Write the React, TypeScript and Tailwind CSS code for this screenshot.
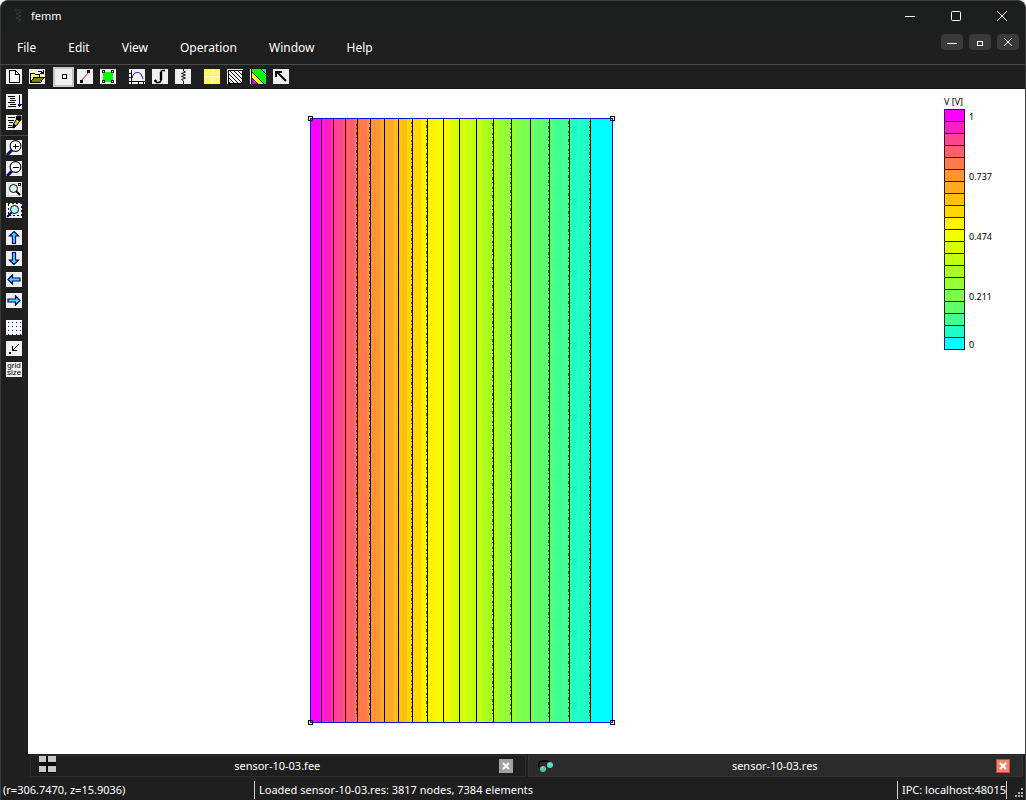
import React from "react";

type IconProps = { children: React.ReactNode; bg?: string };

function Icon({ children, bg = "#f0f0f0" }: IconProps) {
  return (
    <svg
      width="16"
      height="15"
      viewBox="0 0 16 15"
      shapeRendering="crispEdges"
      fill="none"
      stroke="#000"
      className="block shrink-0"
    >
      <rect width="16" height="15" fill={bg} stroke="none" />
      {children}
    </svg>
  );
}

const arrowUp = "M8 1.5 L12.5 6 H9.5 V13.5 H6.5 V6 H3.5 Z";

function Arrow({ angle }: { angle: number }) {
  return (
    <Icon>
      <path
        d={arrowUp}
        fill="#40e0ff"
        stroke="#00006a"
        strokeWidth="1.2"
        shapeRendering="auto"
        transform={`rotate(${angle} 8 7.5)`}
      />
    </Icon>
  );
}

function Lens({ sign }: { sign?: string }) {
  return (
    <Icon>
      <g shapeRendering="auto">
        <path d="M6 10 L1 15" stroke="#000080" strokeWidth="3" />
        <circle cx="9.5" cy="6" r="5.4" fill="#fff" strokeWidth="1.1" />
      </g>
      <path d={sign} />
    </Icon>
  );
}

const newIcon = (
  <Icon>
    <path d="M3.5 1.5 H9.5 L13.5 5.5 V13.5 H3.5 Z" fill="#fff" />
    <path d="M9.5 1.5 V5.5 H13.5 M3 13 H14" />
  </Icon>
);

const openIcon = (
  <Icon>
    <path d="M1.5 13 V4.5 H5.5 L6.5 5.5 H10.5 V8" fill="#ffff80" />
    <path d="M1.5 13.5 L5 8.5 H15 L11.5 13.5 Z" fill="#808000" />
    <path d="M9 2.5 H12 L14 4.5 M14.5 1 V4.5 H11" />
  </Icon>
);

const pointIcon = (
  <Icon>
    <rect x="6.5" y="5.5" width="4" height="4" fill="#fff" />
  </Icon>
);

const lineIcon = (
  <Icon>
    <path d="M4 12 L12 3" stroke="#c02030" shapeRendering="auto" />
    <path d="M3 11h3v3h-3z M10 1h3v3h-3z" fill="#300" stroke="none" />
  </Icon>
);

const blockIcon = (
  <Icon>
    <rect x="3" y="3" width="10" height="10" fill="#00ff00" stroke="none" />
    <path
      d="M2.5 1.5h2v2h-2z M11.5 1.5h2v2h-2z M2.5 11.5h2v2h-2z M11.5 11.5h2v2h-2z"
      fill="#fff"
    />
  </Icon>
);

const plotIcon = (
  <Icon>
    <path d="M2.5 1 V15 M0 12.5 H16 M0 4.5 H2 M0 8.5 H2 M9.5 13 V15 M14.5 13 V15" />
    <path
      d="M3 9 C4.5 4 6.5 3.5 8.5 3.5 C11 3.5 12.5 5 14 10"
      stroke="#0000c0"
      shapeRendering="auto"
    />
  </Icon>
);

const integralIcon = (
  <Icon>
    <g shapeRendering="auto">
      <path
        d="M13 1.5 H10.5 Q9 1.5 9 4 V10.5 Q9 13.5 6.5 13.5 H4"
        strokeWidth="1.6"
      />
      <path d="M9 3 V11" strokeWidth="2.4" />
      <circle cx="3.5" cy="12" r="1" fill="#000" />
    </g>
  </Icon>
);

const circuitIcon = (
  <Icon>
    <path
      d="M8.5 0 V2 L10.5 3 L6.5 4.5 L10.5 6 L6.5 7.5 L10.5 9 L6.5 10.5 L8.5 12 V15"
      strokeWidth=".9"
      shapeRendering="auto"
    />
  </Icon>
);

const meshIcon = (
  <Icon bg="#ffff48">
    <path
      d="M2 2L14 13 M14 2L2 13"
      stroke="#ffec9c"
      strokeWidth="2"
      shapeRendering="auto"
    />
    <path d="M8 0V15 M0 7.5H16" stroke="#fffcc0" />
    <path d="M3.5 2.5h3v3h-3z M10.5 2.5h3v3h-3z M3.5 9.5h3v3h-3z M10.5 9.5h3v3h-3z" stroke="#fff08c" />
  </Icon>
);

const contourIcon = (
  <Icon>
    <path
      d="M1 12 L3 14 M1 8 L7 14 M1 4 L11 14 M2 1 L15 14 M6 1 L15 10 M10 1 L15 6"
      shapeRendering="auto"
    />
    <path d="M1.5 1 V14.5 H15.5 V1.5 H1" />
  </Icon>
);

const densityIcon = (
  <Icon bg="#00ff00">
    <path d="M11 0 H16 V5 Z" fill="#00d8e8" stroke="none" />
    <path d="M1 2 L14 15 H7 L1 9 Z" fill="#ffff00" stroke="none" />
    <path d="M1 8 L8 15 H1 Z" fill="#d000c0" stroke="none" />
    <path
      d="M1 8 L8 15 M1 2 L14 15 M11 0 L16 5"
      shapeRendering="auto"
    />
    <path d="M0.5 0 V15" stroke="#fff" />
    <path d="M1.5 0 V15" />
  </Icon>
);

const vectorIcon = (
  <Icon>
    <path d="M4 3 L13 12" strokeWidth="2" shapeRendering="auto" />
    <path d="M2 2 H9 V4 H4 V8 H2 Z" fill="#000" stroke="none" />
  </Icon>
);

const listIcon = (
  <Icon>
    <path d="M2 2.5H9 M4 4.5H9 M4 6.5H10 M2 8.5H9 M4 10.5H10 M2 12.5H10" />
    <path d="M13.5 1 V13 M11.5 10.5 H16 M12 11.5 H15" stroke="#000080" />
  </Icon>
);

const notesIcon = (
  <Icon>
    <path d="M2 2.5H9 M2 5.5H8 M3 7.5H7 M2 10.5H6 M2 12.5H9" />
    <g shapeRendering="auto">
      <path d="M7 12 L8 8 L12 2 L15 4 L11 10 Z" fill="#e8c020" />
      <path d="M11 1 H15 V5 L13 6 L10 3 Z" fill="#000" />
      <path d="M7 13 L7.5 9 L10 11 Z" fill="#000" />
    </g>
  </Icon>
);

const pageZoomIcon = (
  <Icon>
    <path d="M2.5 1.5H12L14.5 4.5V13.5H2.5Z" fill="#fff" stroke="#ddd" />
    <path d="M12 1.5 H14 V4 M12.5 1 V3.5 H15" />
    <g shapeRendering="auto">
      <circle cx="7.5" cy="6.5" r="4" fill="#d8f8f8" />
      <path d="M10 9 L14 13" strokeWidth="2" />
    </g>
  </Icon>
);

const windowZoomIcon = (
  <Icon>
    <path d="M2 .5H15.5V12.5H2.5V1" stroke="#000080" strokeDasharray="2 2" />
    <g shapeRendering="auto">
      <path d="M6 9 L1 14" stroke="#000080" strokeWidth="2" />
      <circle cx="8.5" cy="6.5" r="4" fill="#b8f8f8" />
    </g>
  </Icon>
);

const gridIcon = (
  <Icon bg="#f8f8ff">
    <path
      d="M2 2.5H16 M2 6.5H16 M2 10.5H16 M2 14.5H16"
      stroke="#0000a0"
      strokeDasharray="1 3"
    />
  </Icon>
);

const snapIcon = (
  <Icon>
    <path d="M13 3 L6.5 9.5" shapeRendering="auto" />
    <path d="M6.5 5 V9.5 H11" />
    <rect x="3" y="11" width="2" height="2" fill="#000080" stroke="none" />
  </Icon>
);

const gridSizeIcon = (
  <span className="block h-[15px] w-4 overflow-hidden bg-[#f0f0f0] text-center font-['Liberation_Sans',sans-serif] text-[8px] leading-[7px] text-black">
    grid size
  </span>
);

const toolGroups = [
  [
    { label: "New", icon: newIcon },
    { label: "Open", icon: openIcon },
  ],
  [
    { label: "Point values", icon: pointIcon },
    { label: "Contours", icon: lineIcon },
    { label: "Areas", icon: blockIcon },
  ],
  [
    { label: "Plot", icon: plotIcon },
    { label: "Integrate", icon: integralIcon },
    { label: "Conductor properties", icon: circuitIcon },
  ],
  [
    { label: "Show mesh", icon: meshIcon },
    { label: "Contour plot", icon: contourIcon },
    { label: "Density plot", icon: densityIcon },
    { label: "Vector plot", icon: vectorIcon },
  ],
];

const sideGroups = [
  [
    { label: "Output window", icon: listIcon },
    { label: "Notes", icon: notesIcon },
  ],
  [
    { label: "Zoom in", icon: <Lens sign="M7 6.5 H13 M9.5 4 V9" /> },
    { label: "Zoom out", icon: <Lens sign="M7 6.5 H13" /> },
    { label: "Natural zoom", icon: pageZoomIcon },
    { label: "Zoom window", icon: windowZoomIcon },
  ],
  [
    { label: "Pan up", icon: <Arrow angle={0} /> },
    { label: "Pan down", icon: <Arrow angle={180} /> },
    { label: "Pan left", icon: <Arrow angle={270} /> },
    { label: "Pan right", icon: <Arrow angle={90} /> },
  ],
  [
    { label: "Show grid", icon: gridIcon },
    { label: "Snap to grid", icon: snapIcon },
    { label: "Grid size", icon: gridSizeIcon },
  ],
];

const menus = ["File", "Edit", "View", "Operation", "Window", "Help"];

// from 1 V down to 0 V
const colors = [
  "#ff00ff", "#ff20c4", "#ff4492", "#ff606c", "#ff7a4c",
  "#ff9432", "#ffaa20", "#ffc010", "#ffd800", "#fff400",
  "#f2ff00", "#d8ff00", "#c2ff10", "#aaff20", "#94ff34",
  "#7cff4c", "#60ff6c", "#44ff92", "#20ffc4", "#00ffff",
];

const legendLabels: Record<number, string> = {
  0: "1",
  5: "0.737",
  10: "0.474",
  15: "0.211",
  19: "0",
};

const WIDTH = 302;
const HEIGHT = 604;

// contours that wobble over a pixel edge
const rough = [3, 4, 7, 8, 12, 13, 15, 16, 17];

// the potential falls with the logarithm of the radius
const radiusAt = (t: number) => 3 + 314 * (Math.exp(0.6735 * t) - 1);

function FieldPlot() {
  const lines = Array.from({ length: 18 }, (_, i) => radiusAt((i + 1) / 19));
  return (
    <svg width="308" height="610" viewBox="0 0 308 610">
      {colors.map((color, i) => (
        <rect
          key={color}
          x={radiusAt(i / 20)}
          y="3"
          width={WIDTH + 3 - radiusAt(i / 20)}
          height={HEIGHT}
          fill={color}
        />
      ))}
      <g stroke="#000" shapeRendering="crispEdges">
        {lines.map((x, i) => (
          <React.Fragment key={i}>
            <path d={`M${Math.floor(x) + 0.5} 3V607`} />
            {rough.includes(i) && (
              <path
                d={`M${Math.floor(x) - 0.5} 6V602`}
                strokeDasharray="2 2 1 3 3 2 1 4"
                strokeDashoffset={i * 5}
                strokeOpacity="0.55"
              />
            )}
          </React.Fragment>
        ))}
      </g>
      <rect
        x="3.5"
        y="3.5"
        width={WIDTH}
        height={HEIGHT}
        fill="none"
        stroke="#1010d8"
      />
      {[3.5, 305.5].map((x) =>
        [3.5, 607.5].map((y) => (
          <rect
            key={`${x}-${y}`}
            x={x - 2}
            y={y - 2}
            width="4"
            height="4"
            fill="none"
            stroke="#000"
          />
        ))
      )}
    </svg>
  );
}

function Legend() {
  return (
    <aside className="w-[131px] shrink-0 pt-[7px] pl-[50px] text-[9px] text-black">
      <p className="leading-3">V [V]</p>
      <ul className="mt-px">
        {colors.map((color, i) => (
          <li key={color} className="flex h-3 items-center gap-1">
            <span
              className="h-[13px] w-[21px] shrink-0 self-start border border-[#222]"
              style={{ backgroundColor: color }}
            />
            <span className="pt-1 leading-3">{legendLabels[i]}</span>
          </li>
        ))}
      </ul>
    </aside>
  );
}

function CloseMark() {
  return (
    <svg width="8" height="8" viewBox="0 0 8 8" stroke="#fff" strokeWidth="2">
      <path d="M1 1L7 7M7 1L1 7" />
    </svg>
  );
}

function App() {
  return (
    <div className="flex min-h-screen flex-col rounded-t-lg border-x border-t border-[#3c3c3c] bg-[#1f1f1f] font-['Noto_Sans','Open_Sans',sans-serif] text-xs text-white">
      <header className="flex h-[30px] items-center rounded-t-lg bg-[#1c1f1e] pl-3">
        <svg width="9" height="14" viewBox="0 0 9 14" stroke="#3c3c3c" fill="none">
          <path d="M2 1H6L8 3L3 5L8 7L3 9L8 11L5 13" />
        </svg>
        <h1 className="ml-[9px] flex-1 text-[11px]">femm</h1>
        <button aria-label="Minimize" className="flex h-full w-[46px] items-center justify-center">
          <svg width="10" height="10" stroke="#fff">
            <path d="M0 5.5H10" />
          </svg>
        </button>
        <button aria-label="Maximize" className="flex h-full w-[46px] items-center justify-center">
          <svg width="10" height="10" stroke="#fff" fill="none">
            <rect x=".5" y=".5" width="9" height="9" rx="1" />
          </svg>
        </button>
        <button aria-label="Close" className="flex h-full w-[46px] items-center justify-center">
          <svg width="10" height="10" stroke="#fff">
            <path d="M0 0L10 10M10 0L0 10" />
          </svg>
        </button>
      </header>

      <nav className="flex h-[34px] items-center border-b border-[#4a4a4a] pr-[6px]">
        <div className="flex flex-1">
          {menus.map((menu) => (
            <button key={menu} className="px-4 leading-5">
              {menu}
            </button>
          ))}
        </div>
        <div className="mb-3 flex gap-[6px]">
          <button aria-label="Minimize document" className="flex h-4 w-[22px] items-center justify-center rounded bg-[#3a3a3a]">
            <svg width="10" height="10" stroke="#fff">
              <path d="M0 6.5H10" />
            </svg>
          </button>
          <button aria-label="Restore document" className="flex h-4 w-[22px] items-center justify-center rounded bg-[#3a3a3a]">
            <svg width="10" height="10" stroke="#fff" fill="none">
              <rect x="2.5" y="4.5" width="5" height="4" />
            </svg>
          </button>
          <button aria-label="Close document" className="flex h-4 w-[22px] items-center justify-center rounded bg-[#3a3a3a]">
            <svg width="10" height="10" stroke="#fff">
              <path d="M1 1L9 9M9 1L1 9" />
            </svg>
          </button>
        </div>
      </nav>

      <div className="flex h-6 items-center gap-[13px] border-b border-[#161616] pl-[5px]">
        {toolGroups.map((group, g) => (
          <div key={g} className="flex items-center gap-[7px]">
            {group.map((tool) =>
              tool.label === "Point values" ? (
                <button
                  key={tool.label}
                  aria-label={tool.label}
                  aria-pressed="true"
                  className="-mr-1 -ml-[5px] flex h-5 w-[21px] items-center justify-center border-2 border-[#c4c4c4] bg-[#f0f0f0]"
                >
                  {tool.icon}
                </button>
              ) : (
                <button key={tool.label} aria-label={tool.label}>
                  {tool.icon}
                </button>
              )
            )}
          </div>
        ))}
      </div>

      <div className="flex flex-1">
        <div className="flex w-[27px] shrink-0 flex-col gap-[6px] pt-[5px]">
          {sideGroups.map((group, g) => (
            <div
              key={g}
              className={`flex flex-col items-start gap-[6px] pl-[5px] ${
                g === 0 ? "border-b border-[#444] pb-[5px]" : g === 1 ? "-mt-[2px]" : "mt-[6px]"
              }`}
            >
              {group.map((tool) => (
                <button key={tool.label} aria-label={tool.label}>
                  {tool.icon}
                </button>
              ))}
            </div>
          ))}
        </div>

        <div className="flex min-w-0 flex-1 flex-col">
          <main className="flex flex-1 bg-white">
            <div className="flex flex-1 items-center justify-center pb-1">
              <FieldPlot />
            </div>
            <Legend />
          </main>
          <div className="flex h-[25px] gap-[2px] px-[2px] py-[1px] text-[11px]">
            <div className="flex h-[22px] flex-1 items-center border border-[#2c2c2c] pr-3 pl-2">
              <svg width="17" height="17" viewBox="0 0 17 17" className="shrink-0 self-start">
                <path d="M0 0H17V17H0Z" fill="#000" />
                <path d="M0 0H7V6H0Z M9 0H17V6H9Z M0 10H7V16H0Z M9 10H17V16H9Z" fill="#c8c8c8" />
                <path d="M0 8H17" stroke="#1f1f1f" />
              </svg>
              <button className="flex-1 leading-5">sensor-10-03.fee</button>
              <button aria-label="Close sensor-10-03.fee" className="flex h-[14px] w-[14px] items-center justify-center bg-[#a0a0a0]">
                <CloseMark />
              </button>
            </div>
            <div className="flex h-[22px] flex-1 items-center border border-[#333] bg-[#2b2b2b] pr-3 pl-2">
              <svg width="17" height="14" viewBox="0 0 17 14" className="shrink-0">
                <path d="M2 8Q1 3 5 2H10L14 4" fill="none" stroke="#000" strokeWidth="1.5" />
                <circle cx="6" cy="10" r="3" fill="#48c8b0" />
                <circle cx="13" cy="6" r="3" fill="#58d8c0" />
                <path d="M5 9h1M12 5h1" stroke="#c8fff0" />
              </svg>
              <button className="flex-1 leading-5">sensor-10-03.res</button>
              <button aria-label="Close sensor-10-03.res" className="flex h-[14px] w-[14px] items-center justify-center border border-[#e04030] bg-[#e88870]">
                <CloseMark />
              </button>
            </div>
          </div>
        </div>
      </div>

      <footer className="flex h-[21px] items-center pl-[2px] text-[11px] leading-[18px]">
        <p className="w-[251px] shrink-0">(r=306.7470, z=15.9036)</p>
        <p className="h-[18px] flex-1 border-l border-[#d0d0d0] pl-1">
          Loaded sensor-10-03.res: 3817 nodes, 7384 elements
        </p>
        <p className="h-[18px] border-x border-[#d0d0d0] pl-1">
          IPC: localhost:48015
        </p>
        <svg width="18" height="18" viewBox="0 0 18 18" fill="#aaa">
          <path d="M14 7h2v2h-2z M11 11h2v2h-2z M14 11h2v2h-2z M8 14h2v2h-2z M11 14h2v2h-2z M14 14h2v2h-2z" />
        </svg>
      </footer>
    </div>
  );
}

export default App;
